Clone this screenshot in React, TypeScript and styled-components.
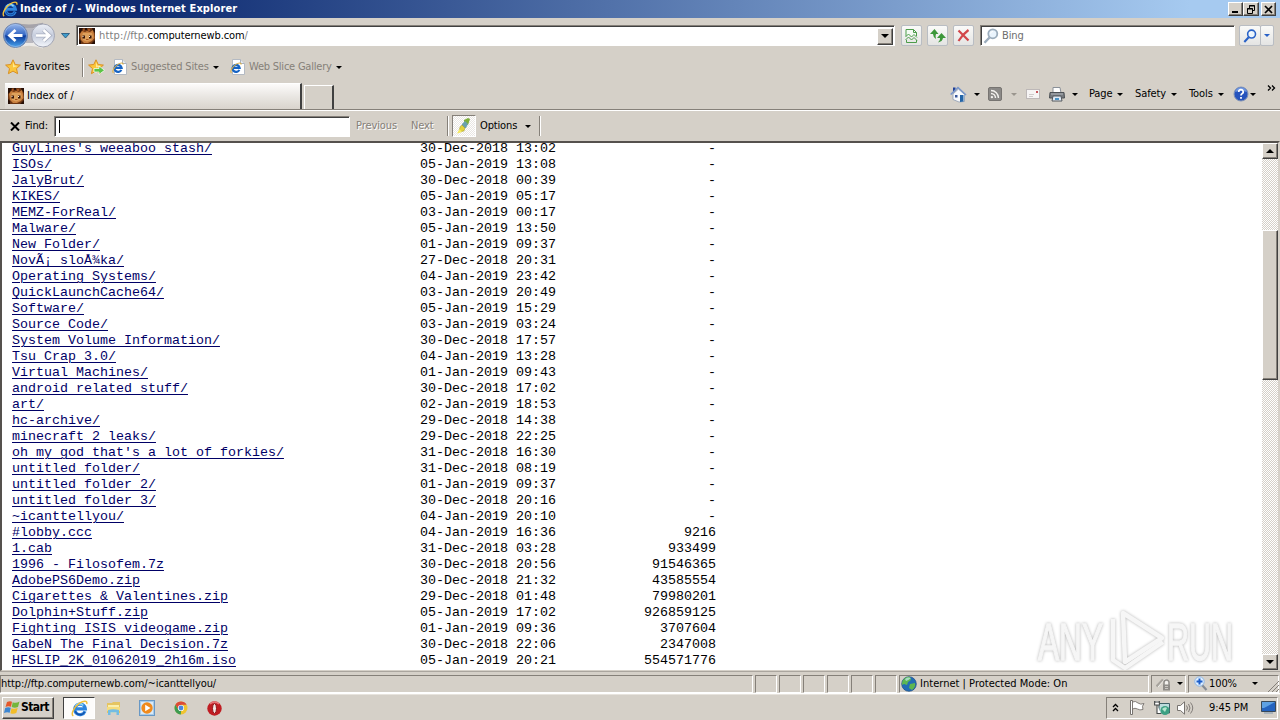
import React from 'react';
import styled, { createGlobalStyle, css } from 'styled-components';

const face = '#d5d0c8';
const ui = `"DejaVu Sans Condensed", "DejaVu Sans", "Noto Sans", sans-serif`;

const Global = createGlobalStyle`
  * { box-sizing: border-box; }
  body { margin: 0; overflow: hidden; background: ${face}; }
  svg { display: block; flex: none; }
`;

const Screen = styled.div`
  width: 1280px; height: 720px; display: flex; flex-direction: column; overflow: hidden;
  background: ${face}; color: #000; font: 11px/14px ${ui};
`;

const Label = styled.span<{ $ml?: number; $w?: number; $ls?: number; $color?: string; $etched?: boolean; $bold?: boolean }>`
  flex: none; white-space: pre; margin-left: ${p => p.$ml ?? 0}px;
  ${p => p.$w !== undefined && css`width: ${p.$w}px;`}
  letter-spacing: ${p => p.$ls ?? -0.1}px;
  color: ${p => p.$color ?? '#000'};
  font-weight: ${p => (p.$bold ? 700 : 400)};
  ${p => p.$etched && css`text-shadow: 1px 1px 0 #fff;`}
`;

const Icon = styled.span<{ $ml?: number; $mt?: number }>`
  display: flex; flex: none; margin-left: ${p => p.$ml ?? 0}px; margin-top: ${p => p.$mt ?? 0}px;
`;

const Arrow = styled.i<{ $ml?: number; $color?: string }>`
  flex: none; width: 0; height: 0; margin-left: ${p => p.$ml ?? 0}px;
  border: 3px solid transparent; border-bottom: 0; border-top-color: ${p => p.$color ?? '#000'};
`;

const Divider = styled.i<{ $ml: number; $h: number }>`
  flex: none; width: 2px; height: ${p => p.$h}px; margin-left: ${p => p.$ml}px;
  border-left: 1px solid #858079; border-right: 1px solid #fff;
`;

const raised = css`
  background: ${face}; border: 1px solid; border-color: #fff #404040 #404040 #fff;
  box-shadow: inset -1px -1px #858079;
`;
const sunken = css`
  border: 1px solid; border-color: #858079 #fff #fff #858079;
`;

const TitleBar = styled.header`
  height: 18px; flex: none; display: flex; align-items: center; padding: 0 4px 0 2px;
  background: linear-gradient(90deg, #0a246a, #0f2c72 12%, #a6caf0 93%);
`;
const TitleText = styled.span`
  margin-left: 2px; flex: 1; color: #fff; font-weight: 700; letter-spacing: 0.11px; white-space: pre;
`;
const CaptionButton = styled.button<{ $ml?: number; $w: number }>`
  ${raised} width: ${p => p.$w}px; height: 14px; margin-left: ${p => p.$ml ?? 0}px; padding: 0;
  display: flex; align-items: center; justify-content: center;
`;

const AddressRow = styled.div`
  height: 36px; flex: none; display: flex; align-items: center; padding-left: 2px; padding-bottom: 1px;
`;
const Field = styled.div<{ $ml: number; $w: number; $h: number }>`
  flex: none; width: ${p => p.$w}px; height: ${p => p.$h}px; margin-left: ${p => p.$ml}px; background: #fff;
  display: flex; align-items: center; border: 1px solid; border-color: #858079 #fff #fff #858079;
  box-shadow: inset 1px 1px #404040; padding-left: 2px;
`;
const DropButton = styled.button`
  ${raised} width: 16px; height: 17px; margin-left: auto; margin-right: 1px; margin-top: 1px; padding: 0;
  display: flex; align-items: center; justify-content: center;
`;
const GlassButton = styled.button<{ $ml: number; $w: number }>`
  flex: none; width: ${p => p.$w}px; height: 21px; margin-left: ${p => p.$ml}px; padding: 0;
  border: 1px solid #b9bdc3; border-radius: 2px; background: linear-gradient(#fafaf8, #e4e4e3);
  display: flex; align-items: center; justify-content: center;
`;

const FavoritesRow = styled.div`
  height: 26px; flex: none; display: flex; align-items: center; padding-left: 5px;
`;

const TabRow = styled.div`
  height: 30px; flex: none; display: flex; padding: 2px 4px 0 5px; border-bottom: 1px solid #858079;
`;
const Tab = styled.div`
  width: 297px; height: 26px; margin-top: 1px; flex: none; display: flex; align-items: center; padding: 0 0 1px 3px;
  background: linear-gradient(#fcfbfa, #e9e6e2 50%, #d9d4cd); border: 1px solid; border-width: 1px 2px 0 0;
  border-color: #fff #404040 transparent transparent;
`;
const NewTab = styled.div`
  width: 30px; height: 24px; margin: 3px 0 0 2px; flex: none; border: 1px solid; border-width: 1px 2px 0 1px;
  border-color: #fff #404040 transparent #fff;
`;
const CommandBar = styled.nav`
  margin-left: 616px; height: 24px; display: flex; align-items: center;
`;

const FindBar = styled.div`
  height: 31px; flex: none; display: flex; align-items: center; padding-left: 10px; border-top: 1px solid #fff;
`;
const Caret = styled.i`width: 1px; height: 13px; margin-left: 2px; background: #000;`;
const Toggle = styled.button`
  ${sunken} width: 24px; height: 22px; margin-left: 3px; padding: 0; display: flex; align-items: center; justify-content: center;
  background: repeating-conic-gradient(#fff 0 25%, #e9e6e2 0 50%) 0 0 / 2px 2px;
`;

const Viewport = styled.main`
  position: relative; height: 530px; flex: none; display: flex; background: #fff;
  border: solid; border-width: 2px 2px 1px 2px; border-color: #55514d ${face} ${face} #55514d; overflow: hidden;
`;
const Listing = styled.div`
  flex: 1; height: 527px; overflow: hidden; padding-left: 10px;
  font: 13.333px/16px "Liberation Mono", monospace;
`;
const Entry = styled.div`
  display: grid; grid-template-columns: 408px 136px 160px; height: 16px; white-space: pre;
  &:first-child { margin-top: -2px; }
`;
const FileLink = styled.a`
  color: #000066; text-decoration: underline; text-underline-offset: 2px; text-decoration-thickness: 1px; justify-self: start;
`;
const Size = styled.span`text-align: right;`;

const ScrollTrack = styled.div`
  width: 16px; height: 527px; flex: none; display: flex; flex-direction: column;
  background: repeating-conic-gradient(#fff 0 25%, ${face} 0 50%) 0 0 / 2px 2px;
`;
const ScrollButton = styled.button`
  ${raised} width: 16px; height: 16px; flex: none; padding: 0; display: flex; align-items: center; justify-content: center;
`;
const Thumb = styled.div`
  ${raised} height: 150px; margin: 71px 0 auto; flex: none;
`;
const ArrowUp = styled.i`
  border: 4px solid transparent; border-top: 0; border-bottom-color: #000;
`;
const ArrowDown = styled.i`
  border: 4px solid transparent; border-bottom: 0; border-top-color: #000;
`;

const Watermark = styled.div`
  position: absolute; left: 1034px; top: 464px;
  svg { filter: drop-shadow(0 0 1.5px #b4b4b4); }
`;

const StatusBar = styled.footer`
  height: 23px; flex: none; display: flex; align-items: flex-start; padding-top: 3px; border-bottom: 1px solid #fff;
  border-top: 1px solid #aaa59e;
`;
const Panel = styled.div<{ $w: number }>`
  ${sunken} width: ${p => p.$w}px; height: 18px; flex: none; margin-right: 2px; display: flex; align-items: center;
  padding-bottom: 1px;
`;

const TaskBar = styled.div`
  height: 26px; flex: none; display: flex; align-items: flex-start; padding: 2px 2px 0; border-top: 1px solid #e7e3dd;
`;
const StartButton = styled.button`
  ${raised} width: 52px; height: 22px; padding: 0 0 2px 1px; display: flex; align-items: center; font: 700 12px/14px ${ui};
`;
const TaskButton = styled.div`
  width: 32px; height: 22px; margin-left: 9px; display: flex; align-items: center; justify-content: center;
  border: 1px solid; border-color: #404040 #fff #fff #404040; background: #fdfcfb;
`;
const Tray = styled.div`
  ${sunken} width: 172px; height: 22px; margin-left: auto; display: flex; align-items: center; padding: 0 0 1px 5px;
`;

const Ie = ({ s = 16 }: { s?: number }) => (
  <svg width={s} height={s} viewBox="0 0 16 16" fill="none">
    <path d="M13.2 10.600A5 5 0 1 1 13.500 8.300H4.600" stroke="#2f86df" strokeWidth="3" />
    <path d="M12.800 11.300A4.800 4.800 0 0 1 4 10.600" stroke="#1450a8" strokeWidth="1.200" />
    <path d="M4.400 5.600A4.200 4.200 0 0 1 11.500 5.200" stroke="#8ed6f8" strokeWidth="1.500" />
    <path d="M2.200 15C-.8 13.500 3.200 6.300 8 3C11.500.7 15.800 0 14.800 3.800" stroke="#f0bf3a" strokeWidth="1.400" />
  </svg>
);
const PageIe = () => (
  <svg width="15" height="16" viewBox="0 0 15 16">
    <path d="M2.500.5H10.500L14.500 4.500V15.500H2.500Z" fill="#fff" stroke="#b4bac3" />
    <path d="M10.500.5V4.500H14.500" fill="#e4e8ee" stroke="#aab1bb" />
    <g transform="translate(0 3) scale(.74)" fill="none">
      <path d="M12.600 10.600A4.800 4.800 0 1 1 13 7.900H4.400" stroke="#1764c4" strokeWidth="3" />
      <path d="M2 14.600C-.6 13 3.200 6.300 8 3.200C11.500.9 15.500.2 14.800 3.600" stroke="#e0b040" strokeWidth="1.400" />
    </g>
  </svg>
);
const Critter = () => (
  <svg width="16" height="16" viewBox="0 0 16 16">
    <path d="M0 0H16V16H0Z" fill="#6b3513" />
    <path d="M0 0H4L2 4L0 6ZM6 0H8V2H6ZM13 0H16V5L14 3ZM0 11L2 13V16H0ZM16 12V16H12L14 14Z" fill="#260f06" />
    <path d="M1 6L3 3L6 4L8 3L11 4L14 2L15 6L15.500 10L13 13L9 15L5 15L2 12Z" fill="#c97f3e" />
    <path d="M4 5L8 5L13 5L14 9L12 12L8 13.500L4 12L3 8Z" fill="#dda05c" />
    <path d="M3.500 7.500H6V10.500H3.500ZM10 7.500H12.500V10.500H10Z" fill="#3a1608" />
    <path d="M3.500 8H4.500V9H3.500ZM10 8H11V9H10Z" fill="#f6e8d6" />
    <path d="M7 11H9.500V12H7ZM4 1H5.500V3H4ZM9 1H11V3H9Z" fill="#a4521f" />
  </svg>
);
const NavButtons = () => (
  <svg width="54" height="28" viewBox="0 0 54 28">
    <defs>
      <linearGradient id="bk" x2="0" y2="1"><stop stopColor="#9bb9ec" /><stop offset=".48" stopColor="#3467c4" /><stop offset=".52" stopColor="#0d3b9c" /><stop offset="1" stopColor="#4aa7ef" /></linearGradient>
      <linearGradient id="fw" x2="0" y2="1"><stop stopColor="#eceff6" /><stop offset=".5" stopColor="#c6cddd" /><stop offset="1" stopColor="#f4f7fc" /></linearGradient>
    </defs>
    <path d="M13 .8Q27 4 41 .8V6H13Z" fill="#a5a3a9" />
    <path d="M13 26.500Q27 21 41 26.500V20H13Z" fill="#eceae7" />
    <path d="M24 6H31V21H24Z" fill="#b9b8bf" />
    <circle cx="13.500" cy="13.500" r="12" fill="url(#bk)" stroke="#7788aa" />
    <circle cx="13.500" cy="13.500" r="11" fill="none" stroke="#a9c5ee" strokeOpacity=".6" />
    <circle cx="41" cy="13.500" r="11.500" fill="url(#fw)" stroke="#a2a5b3" />
    <path d="M20.500 13.500H8M13.500 8L7.500 13.500L13.500 19" stroke="#fff" strokeWidth="2.800" fill="none" />
    <path d="M34 13.500H47M41.500 8L47.500 13.500L41.500 19" stroke="#aab0c1" strokeWidth="4" fill="none" />
    <path d="M34 13.500H47M41.500 8L47.500 13.500L41.500 19" stroke="#fff" strokeWidth="2.400" fill="none" />
  </svg>
);
const Star = ({ add }: { add?: boolean }) => (
  <svg width="17" height="16" viewBox="0 0 17 16">
    <path d="M8 .8L10.200 5.500L15.400 6.100L11.500 9.600L12.600 14.700L8 12.100L3.400 14.700L4.500 9.600L.6 6.100L5.800 5.500Z" fill="#fbc63c" stroke="#d99024" />
    <path d="M8 3L9.300 6.500L12.800 7L8 8.500Z" fill="#ffe995" />
    {add && <path d="M6 9.500H11V7L16.500 11.300L11 15.500V13H6Z" fill="#5bc446" stroke="#fff" strokeWidth=".7" />}
  </svg>
);
const Magnifier = ({ color, s = 16 }: { color: string; s?: number }) => (
  <svg width={s} height={s} viewBox="0 0 16 16" fill="none">
    <path d="M6.500 9.500L1.500 14.800" stroke={color} strokeWidth="2.400" />
    <circle cx="9.800" cy="5.800" r="4.500" fill="#eaf4fd" stroke={color} strokeWidth="1.800" />
    <path d="M7.500 5.500A2.500 2.500 0 0 1 10 3.500" stroke="#fff" />
  </svg>
);
const Compat = () => (
  <svg width="13" height="16" viewBox="0 0 13 16" fill="none" stroke="#4d9c4a">
    <path d="M1 8V1.500H8.500L11.500 4.500V8M8.500 1.500V4.500H11.500" fill="#f3faf2" />
    <path d="M.5 9L3.500 6L6.500 9L9 6.500L12 9.500M.5 12L3.500 9L6.500 12L9 9.500L12 12.500M1.500 12V14.500H11.500V12" />
  </svg>
);
const Refresh = () => (
  <svg width="16" height="14" viewBox="0 0 16 14" fill="#3d973a">
    <path d="M4.500 0L0 5H3Q3 8 6 10Q5 7 6 5H8.500Z" /><path d="M11.500 4L7 9H10Q10.500 11.500 8 13.500Q12.500 12.500 13 9H16Z" />
  </svg>
);
const Stop = () => (
  <svg width="13" height="13" viewBox="0 0 13 13"><path d="M1.500 1.500Q6 6 11.500 11.500M11.500 1Q6 5 1.500 12" stroke="#d2464a" strokeWidth="2.200" fill="none" /></svg>
);
const Home = () => (
  <svg width="17" height="17" viewBox="0 0 17 17">
    <path d="M3 8L8.500 3L14.500 8.500V15.500L9 16L3 13.500Z" fill="#f8fafc" stroke="#8e9cb4" strokeWidth=".8" />
    <path d="M3 1.500H5.500V4.500L3 6.500Z" fill="#1f3f98" />
    <path d="M.7 8.500L8 1.500L16 9" stroke="#7996c9" strokeWidth="1.600" fill="none" />
    <path d="M10 9H13.500V15.500L10 16Z" fill="#2465a8" /><path d="M5 9H7.500V11.500H5Z" fill="#38569a" />
  </svg>
);
const Rss = () => (
  <svg width="14" height="14" viewBox="0 0 14 14" fill="none">
    <rect x=".5" y=".5" width="13" height="13" rx="1.500" fill="#8b8987" stroke="#777471" />
    <path d="M3 6.500A4.500 4.500 0 0 1 7.500 11M3 3.500A7.500 7.500 0 0 1 10.500 11" stroke="#f4f2ef" strokeWidth="1.400" /><circle cx="3.900" cy="10.100" r="1.200" fill="#f4f2ef" />
  </svg>
);
const Mail = () => (
  <svg width="14" height="10" viewBox="0 0 14 10"><rect x=".5" y=".5" width="13" height="9" fill="#f6f4f4" stroke="#bdb8b8" /><path d="M10 2H12V4H10Z" fill="#c6555b" /><path d="M3 5.500H8M3 7.500H7" stroke="#cfcaca" /></svg>
);
const Printer = () => (
  <svg width="16" height="15" viewBox="0 0 16 15">
    <path d="M4 .5H11L12 6H4Z" fill="#fff" stroke="#8a9098" />
    <path d="M1 5.500H15L15.500 11H.5Z" fill="#777b80" stroke="#4c5055" />
    <path d="M2 7H14" stroke="#b4b8bd" /><path d="M4 9H12L13 14H3Z" fill="#dfeaf6" stroke="#54585d" />
    <path d="M6 11H10V13H6Z" fill="#4d94c5" />
  </svg>
);
const Help = () => (
  <svg width="16" height="16" viewBox="0 0 16 16" fill="none">
    <circle cx="8" cy="8" r="7" fill="#2653bd" stroke="#8092b5" /><path d="M2 6A6.300 6.300 0 0 1 14 6Q8 4 2 6Z" fill="#6f96df" />
    <path d="M5.800 6A2.200 2.200 0 1 1 9 7.700Q8 8.200 8 9.500" stroke="#fff" strokeWidth="1.700" /><path d="M7.100 11H8.900V12.700H7.100Z" fill="#fff" />
  </svg>
);
const Highlighter = () => (
  <svg width="16" height="16" viewBox="0 0 16 16">
    <path d="M8 2L12 0L14 1L12 7L8 6Z" fill="#7cae38" /><path d="M6 6L9 3L12 6L10 10L6 10Z" fill="#6aa0ad" />
    <path d="M4 9L6 7L9 10L8 13L3 14Z" fill="#e2d23c" stroke="#9a9431" strokeWidth=".5" /><path d="M1 15.500L3.500 11L6 14Z" fill="#f7ec62" />
  </svg>
);
const Globe = () => (
  <svg width="16" height="16" viewBox="0 0 16 16">
    <circle cx="8" cy="8" r="7.300" fill="#226db5" stroke="#1b4b83" strokeWidth=".7" />
    <path d="M2 4Q5 0 9 1L10 4L7 6L6 9L3 8L1 9Q.7 6 2 4ZM9 8L14 7Q15 11 11 14L8 12Z" fill="#5db751" />
    <path d="M4 3Q7 .8 10 2Q8 4 5 5Z" fill="#c4ecf5" opacity=".7" />
  </svg>
);
const Privacy = () => (
  <svg width="16" height="14" viewBox="0 0 16 14" fill="none">
    <path d="M.5 9.500L7 2.500" stroke="#a7a39d" strokeWidth="2.500" /><path d="M2 10L9 2L11 3" stroke="#f0eeea" />
    <path d="M8 8V5.500A2.500 2.500 0 0 1 13 5.500V8" stroke="#8f8c88" strokeWidth="1.500" fill="#f3f1ee" />
    <path d="M7 7.500H14V13.500H7Z" fill="#8f8c88" /><path d="M9 9.500H12M9 11.500H12" stroke="#c9c6c1" />
  </svg>
);
const ZoomIcon = () => (
  <svg width="14" height="15" viewBox="0 0 14 15" fill="none">
    <path d="M8 9L12.500 14" stroke="#858b94" strokeWidth="2.200" /><circle cx="5.500" cy="5.500" r="4.700" fill="#deefff" stroke="#8eb6e5" />
    <path d="M5.500 2.500V8.500M2.500 5.500H8.500" stroke="#1c5dc9" strokeWidth="2" />
  </svg>
);
const WinFlag = () => (
  <svg width="16" height="15" viewBox="0 0 16 15">
    <path d="M3 2Q6 .5 8 1.700L7 6.700Q4 5.600 1.500 7Z" fill="#e4582b" /><path d="M8.700 2.200Q12 3.500 15.500 1.500L14 7Q11 8.200 7.700 7.100Z" fill="#74b63b" />
    <path d="M1.200 8Q4 6.700 6.800 7.800L5.700 12.700Q3 11.600 0 13Z" fill="#3c86d2" /><path d="M7.500 8.200Q10.500 9.300 13.700 8L12.300 13Q9.500 14.300 6.400 13.200Z" fill="#f2bd28" />
  </svg>
);
const Explorer = () => (
  <svg width="15" height="15" viewBox="0 0 15 15">
    <path d="M1 2H6L7 1H14V12H1Z" fill="#e5c461" /><path d="M2 4H13V12H2Z" fill="#faefae" /><path d="M1 6H14V10H1Z" fill="#f6dc7c" />
    <path d="M2 14V9Q7 7.500 13 9V14H10.500V11.500H4.500V14Z" fill="#72bce3" />
  </svg>
);
const Media = () => (
  <svg width="16" height="16" viewBox="0 0 16 16">
    <rect x=".5" y=".5" width="15" height="15" fill="#a8cbe9" stroke="#6898c5" /><rect x="2" y="2" width="12" height="12" fill="#d9eaf8" />
    <circle cx="8" cy="8" r="5.700" fill="#f08a1c" /><path d="M6.200 4.800L11.500 8L6.200 11.200Z" fill="#fff" />
  </svg>
);
const Chrome = () => (
  <svg width="14" height="14" viewBox="0 0 14 14">
    <circle cx="7" cy="7" r="6.500" fill="#efc431" /><path d="M1.400 3.700A6.500 6.500 0 0 1 12.600 3.700H7L4.200 8.600Z" fill="#dc4a38" />
    <path d="M1.400 3.700L4.200 8.600L7 10L6.800 13.500A6.500 6.500 0 0 1 1.400 3.700Z" fill="#3d9b51" /><circle cx="7" cy="7" r="3.100" fill="#fff" /><circle cx="7" cy="7" r="2.400" fill="#4a86dd" />
  </svg>
);
const Opera = () => (
  <svg width="15" height="15" viewBox="0 0 15 15"><circle cx="7.500" cy="7.500" r="7.200" fill="#c01c22" /><path d="M3 3Q7.500 -1 12 3" stroke="#e8777a" strokeWidth="1.500" fill="none" /><ellipse cx="7.500" cy="7.500" rx="2" ry="4.900" fill="#f4e9e6" stroke="#8c1015" /></svg>
);
const Flag = () => (
  <svg width="16" height="15" viewBox="0 0 16 15"><path d="M1.500 .5H3.500V14.500H1.500Z" stroke="#77736f" fill="#fff" /><path d="M3.500 2Q6.500.5 9 3Q11.500 5 15 3.500Q12.500 6 14 9.500Q10.500 10.500 8.500 9Q6 7.500 3.500 9Z" fill="#fff" stroke="#77736f" strokeWidth=".9" /></svg>
);
const Network = () => (
  <svg width="16" height="16" viewBox="0 0 16 16">
    <path d="M5 3.500H15.500V13H5Z" fill="#bcdcdc" stroke="#3f6068" /><circle cx="11" cy="10.500" r="4.500" fill="#3da083" /><path d="M8 9Q11 6 13 8L11 12Z" fill="#b5e4cf" />
    <path d="M.6 1V5H5.400V1M3 5V13.500H7M2 1V3M4 1V3" stroke="#484b4b" strokeWidth="1.100" fill="#fff" />
  </svg>
);
const Speaker = () => (
  <svg width="17" height="14" viewBox="0 0 17 14" fill="none" stroke="#77736f"><path d="M.5 4.500H3.500L7.500.8V13.200L3.500 9.500H.5Z" fill="#fff" /><path d="M9.500 4.500Q11.500 7 9.500 9.500M11.500 3Q14.500 7 11.500 11M13.500 1.500Q18 7 13.500 12.500" strokeWidth=".9" /></svg>
);
const Desktop = () => (
  <svg width="15" height="13" viewBox="0 0 15 13"><path d="M.5.5H14.500V10.500H.5Z" fill="#2463bf" stroke="#394958" /><path d="M1 1H14L3 7H1Z" fill="#5ea1e3" /><path d="M3 12H12" stroke="#8ba0b5" strokeWidth="1.200" /></svg>
);

const entries: [string, string, string][] = [
  ["GuyLines's weeaboo stash/", '30-Dec-2018 13:02', '-'],
  ['ISOs/', '05-Jan-2019 13:08', '-'],
  ['JalyBrut/', '30-Dec-2018 00:39', '-'],
  ['KIKES/', '05-Jan-2019 05:17', '-'],
  ['MEMZ-ForReal/', '03-Jan-2019 00:17', '-'],
  ['Malware/', '05-Jan-2019 13:50', '-'],
  ['New Folder/', '01-Jan-2019 09:37', '-'],
  ['NovÃ¡ sloÅ¾ka/', '27-Dec-2018 20:31', '-'],
  ['Operating Systems/', '04-Jan-2019 23:42', '-'],
  ['QuickLaunchCache64/', '03-Jan-2019 20:49', '-'],
  ['Software/', '05-Jan-2019 15:29', '-'],
  ['Source Code/', '03-Jan-2019 03:24', '-'],
  ['System Volume Information/', '30-Dec-2018 17:57', '-'],
  ['Tsu Crap 3.0/', '04-Jan-2019 13:28', '-'],
  ['Virtual Machines/', '01-Jan-2019 09:43', '-'],
  ['android related stuff/', '30-Dec-2018 17:02', '-'],
  ['art/', '02-Jan-2019 18:53', '-'],
  ['hc-archive/', '29-Dec-2018 14:38', '-'],
  ['minecraft 2 leaks/', '29-Dec-2018 22:25', '-'],
  ["oh my god that's a lot of forkies/", '31-Dec-2018 16:30', '-'],
  ['untitled folder/', '31-Dec-2018 08:19', '-'],
  ['untitled folder 2/', '01-Jan-2019 09:37', '-'],
  ['untitled folder 3/', '30-Dec-2018 20:16', '-'],
  ['~icanttellyou/', '04-Jan-2019 20:10', '-'],
  ['#lobby.ccc', '04-Jan-2019 16:36', '9216'],
  ['1.cab', '31-Dec-2018 03:28', '933499'],
  ['1996 - Filosofem.7z', '30-Dec-2018 20:56', '91546365'],
  ['AdobePS6Demo.zip', '30-Dec-2018 21:32', '43585554'],
  ['Cigarettes & Valentines.zip', '29-Dec-2018 01:48', '79980201'],
  ['Dolphin+Stuff.zip', '05-Jan-2019 17:02', '926859125'],
  ['Fighting ISIS videogame.zip', '01-Jan-2019 09:36', '3707604'],
  ['GabeN The Final Decision.7z', '30-Dec-2018 22:06', '2347008'],
  ['HFSLIP_2K_01062019_2h16m.iso', '05-Jan-2019 20:21', '554571776'],
];

export default function App() {
  return (
    <Screen>
      <Global />
      <TitleBar>
        <Ie />
        <TitleText>Index of / - Windows Internet Explorer</TitleText>
        <CaptionButton $w={15}><svg width="9" height="9"><path d="M1 7H7" stroke="#000" strokeWidth="2" /></svg></CaptionButton>
        <CaptionButton $w={16}><svg width="10" height="9" fill="none" stroke="#000"><path d="M3.500 3V.5H8.500V5.500H6.500M3 1H9M1 4H7" /><path d="M1.500 3.500H6.500V8.500H1.500Z" /></svg></CaptionButton>
        <CaptionButton $w={15} $ml={2}><svg width="9" height="9"><path d="M1 1L8 8M8 1L1 8" stroke="#000" strokeWidth="1.700" /></svg></CaptionButton>
      </TitleBar>

      <AddressRow>
        <NavButtons />
        <Icon $ml={5}><svg width="9" height="6"><path d="M.5.5H8.500L4.500 5Z" fill="#3f9ccb" stroke="#1e4f77" strokeWidth=".8" /></svg></Icon>
        <Field $ml={6} $w={819} $h={21}>
          <Critter />
          <Label $ml={4} $color="#808080" $ls={0.15}>http://ftp.</Label>
          <Label $ls={-0.1}>computernewb.com</Label>
          <Label $color="#808080">/</Label>
          <DropButton><ArrowDown /></DropButton>
        </Field>
        <GlassButton $ml={6} $w={21}><Compat /></GlassButton>
        <GlassButton $ml={5} $w={21}><Refresh /></GlassButton>
        <GlassButton $ml={5} $w={21}><Stop /></GlassButton>
        <Field $ml={6} $w={255} $h={21}>
          <Magnifier color="#9bacbc" />
          <Label $ml={3} $color="#6d6d6d">Bing</Label>
        </Field>
        <GlassButton $ml={4} $w={22}><Magnifier color="#2861c7" s={14} /></GlassButton>
        <GlassButton $ml={-1} $w={14}><Arrow $color="#2861c7" /></GlassButton>
      </AddressRow>

      <FavoritesRow>
        <Star />
        <Label $ml={2} $w={58} $ls={0.15}>Favorites</Label>
        <Divider $ml={0} $h={19} />
        <Icon $ml={4}><Star add /></Icon>
        <Icon $ml={7}><PageIe /></Icon>
        <Label $ml={4} $w={82} $ls={-0.15} $color="#858079">Suggested Sites</Label>
        <Arrow />
        <Icon $ml={11}><PageIe /></Icon>
        <Label $ml={4} $w={87} $ls={-0.22} $color="#858079">Web Slice Gallery</Label>
        <Arrow />
      </FavoritesRow>

      <TabRow>
        <Tab><Critter /><Label $ml={3} $ls={0.05}>Index of /</Label></Tab>
        <NewTab />
        <CommandBar>
          <Home />
          <Arrow $ml={7} />
          <Icon $ml={8}><Rss /></Icon>
          <Arrow $ml={9} $color="#9a958e" />
          <Icon $ml={9}><Mail /></Icon>
          <Icon $ml={9}><Printer /></Icon>
          <Arrow $ml={7} />
          <Label $ml={11} $w={28}>Page</Label><Arrow />
          <Label $ml={12} $w={36}>Safety</Label><Arrow />
          <Label $ml={12} $w={29}>Tools</Label><Arrow />
          <Icon $ml={9}><Help /></Icon><Arrow $ml={1} />
          <Icon $ml={11} $mt={-13}><svg width="9" height="6" fill="none" stroke="#000" strokeWidth="1.300"><path d="M1 .5L3.500 3L1 5.500M5 .5L7.500 3L5 5.500" /></svg></Icon>
        </CommandBar>
      </TabRow>

      <FindBar>
        <svg width="10" height="9"><path d="M1 .5L9 8.500M9 .5L1 8.500" stroke="#000" strokeWidth="2" /></svg>
        <Label $ml={5} $w={29}>Find:</Label>
        <Field $ml={0} $w={296} $h={21}><Caret /></Field>
        <Label $ml={6} $w={55} $color="#858079" $etched>Previous</Label>
        <Label $w={36} $color="#858079" $etched>Next</Label>
        <Divider $ml={0} $h={20} />
        <Toggle><Highlighter /></Toggle>
        <Label $ml={4} $w={45} $ls={-0.15}>Options</Label>
        <Arrow />
        <Divider $ml={8} $h={20} />
      </FindBar>

      <Viewport>
        <Listing>
          {entries.map(([name, date, size]) => (
            <Entry key={name}><FileLink>{name}</FileLink><span>{date}</span><Size>{size}</Size></Entry>
          ))}
        </Listing>
        <ScrollTrack>
          <ScrollButton><ArrowUp /></ScrollButton>
          <Thumb />
          <ScrollButton><ArrowDown /></ScrollButton>
        </ScrollTrack>
        <Watermark>
          <svg width="202" height="66" viewBox="0 0 202 66">
            <g fill="none" stroke="#f6f6f6" strokeWidth="4.500" strokeLinejoin="round">
              <path d="M87 6L126 31L89 55Z" />
              <path d="M77 12V53L89 61L127 35" />
            </g>
            <g fill="#f6f6f6" stroke="#f6f6f6" strokeWidth="1.300" fontFamily="Liberation Sans Narrow, Liberation Sans" fontSize="51">
              <text x="2" y="53" textLength="65" lengthAdjust="spacingAndGlyphs">ANY</text>
              <text x="131" y="53" textLength="66" lengthAdjust="spacingAndGlyphs">RUN</text>
            </g>
          </svg>
        </Watermark>
      </Viewport>

      <StatusBar>
        <Panel $w={753}><Label $ls={-0.08}>http://ftp.computernewb.com/~icanttellyou/</Label></Panel>
        {[0, 1, 2, 3, 4, 5].map(i => <Panel key={i} $w={22} />)}
        <Panel $w={250}><Icon $ml={1}><Globe /></Icon><Label $ml={3} $ls={0.02}>Internet | Protected Mode: On</Label></Panel>
        <Panel $w={35}><Icon $ml={4}><Privacy /></Icon><Arrow $ml={5} /></Panel>
        <Panel $w={91}><Icon $ml={5}><ZoomIcon /></Icon><Label $ml={1} $w={43}>100%</Label><Arrow /><Icon $ml={9} $mt={4}><svg width="12" height="12" stroke="#858079"><path d="M1 12L12 1M5 12L12 5M9 12L12 9" /></svg></Icon></Panel>
      </StatusBar>

      <TaskBar>
        <StartButton><WinFlag /><Label $ml={1} $bold $ls={-0.6}>Start</Label></StartButton>
        <TaskButton><Ie s={17} /></TaskButton>
        <Icon $ml={11} $mt={4}><Explorer /></Icon>
        <Icon $ml={18} $mt={3}><Media /></Icon>
        <Icon $ml={19} $mt={4}><Chrome /></Icon>
        <Icon $ml={19} $mt={4}><Opera /></Icon>
        <Tray>
          <svg width="7" height="9" fill="none" stroke="#000" strokeWidth="1.300"><path d="M1 4L3.500 1.500L6 4M1 8L3.500 5.500L6 8" /></svg>
          <Icon $ml={10}><Flag /></Icon>
          <Icon $ml={9}><Network /></Icon>
          <Icon $ml={7}><Speaker /></Icon>
          <Label $ml={15} $w={52}>9:45 PM</Label>
          <Desktop />
        </Tray>
      </TaskBar>
    </Screen>
  );
}
